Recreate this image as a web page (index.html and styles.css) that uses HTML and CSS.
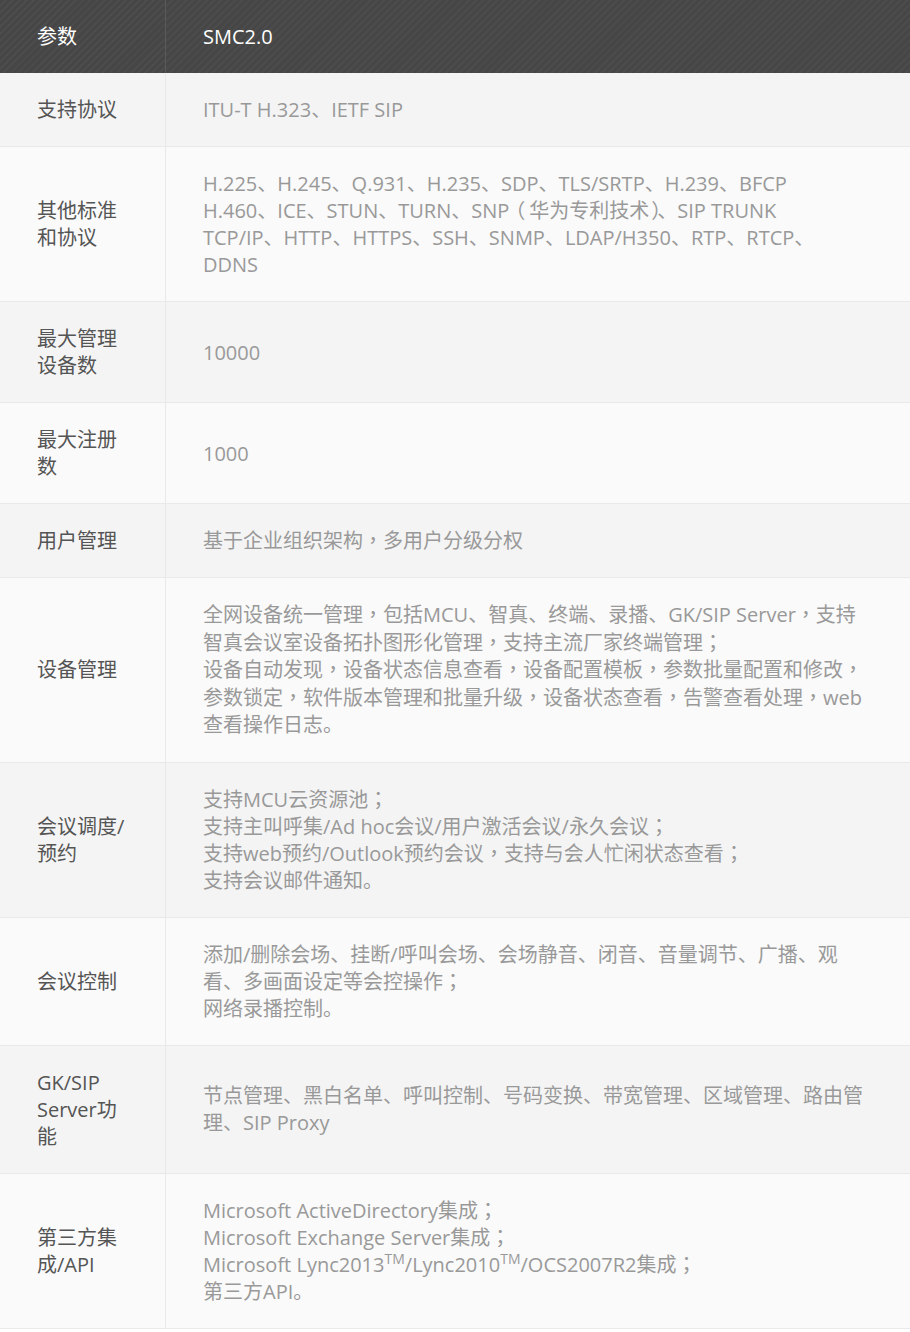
FILE: index.html
```html
<!DOCTYPE html>
<html lang="zh-CN">
<head>
  <meta charset="UTF-8">
  <meta name="viewport" content="width=device-width, initial-scale=1.0">
  <title>SMC2.0 参数</title>
  <link rel="stylesheet" href="styles.css">
</head>
<body>

  <table class="spec-table">
    <thead>
      <tr>
        <th class="col-name">参数</th>
        <th>SMC2.0</th>
      </tr>
    </thead>
    <tbody>
      <tr>
        <td class="col-name">支持协议</td>
        <td>ITU-T H.323、IETF SIP</td>
      </tr>
      <tr>
        <td class="col-name">其他标准和协议</td>
        <td>H.225、H.245、Q.931、H.235、SDP、TLS/SRTP、H.239、BFCP<br>H.460、ICE、STUN、TURN、SNP<span class="fw paren-l" lang="zh-TW">（</span>华为专利技术<span class="fw paren-r" lang="zh-TW">）</span>、SIP TRUNK<br>TCP/IP、HTTP、HTTPS、SSH、SNMP、LDAP/H350、RTP、RTCP、<br>DDNS</td>
      </tr>
      <tr>
        <td class="col-name">最大管理设备数</td>
        <td>10000</td>
      </tr>
      <tr>
        <td class="col-name">最大注册数</td>
        <td>1000</td>
      </tr>
      <tr>
        <td class="col-name">用户管理</td>
        <td>基于企业组织架构<span class="fw" lang="zh-TW">，</span>多用户分级分权</td>
      </tr>
      <tr>
        <td class="col-name">设备管理</td>
        <td class="tall">全网设备统一管理<span class="fw" lang="zh-TW">，</span>包括MCU、智真、终端、录播、GK/SIP Server<span class="fw" lang="zh-TW">，</span>支持智真会议室设备拓扑图形化管理<span class="fw" lang="zh-TW">，</span>支持主流厂家终端管理<span class="fw" lang="zh-TW">；</span><br>设备自动发现<span class="fw" lang="zh-TW">，</span>设备状态信息查看<span class="fw" lang="zh-TW">，</span>设备配置模板<span class="fw" lang="zh-TW">，</span>参数批量配置和修改<span class="fw" lang="zh-TW">，</span>参数锁定<span class="fw" lang="zh-TW">，</span>软件版本管理和批量升级<span class="fw" lang="zh-TW">，</span>设备状态查看<span class="fw" lang="zh-TW">，</span>告警查看处理<span class="fw" lang="zh-TW">，</span>web查看操作日志。</td>
      </tr>
      <tr>
        <td class="col-name">会议调度/预约</td>
        <td>支持MCU云资源池<span class="fw" lang="zh-TW">；</span><br>支持主叫呼集/Ad hoc会议/用户激活会议/永久会议<span class="fw" lang="zh-TW">；</span><br>支持web预约/Outlook预约会议<span class="fw" lang="zh-TW">，</span>支持与会人忙闲状态查看<span class="fw" lang="zh-TW">；</span><br>支持会议邮件通知。</td>
      </tr>
      <tr>
        <td class="col-name">会议控制</td>
        <td>添加/删除会场、挂断/呼叫会场、会场静音、闭音、音量调节、广播、观看、多画面设定等会控操作<span class="fw" lang="zh-TW">；</span><br>网络录播控制。</td>
      </tr>
      <tr>
        <td class="col-name">GK/SIP Server功能</td>
        <td>节点管理、黑白名单、呼叫控制、号码变换、带宽管理、区域管理、路由管理、SIP Proxy</td>
      </tr>
      <tr>
        <td class="col-name">第三方集成/API</td>
        <td>Microsoft ActiveDirectory集成<span class="fw" lang="zh-TW">；</span><br>Microsoft Exchange Server集成<span class="fw" lang="zh-TW">；</span><br>Microsoft Lync2013<sup>TM</sup>/Lync2010<sup>TM</sup>/OCS2007R2集成<span class="fw" lang="zh-TW">；</span><br>第三方API。</td>
      </tr>
    </tbody>
  </table>

</body>
</html>
```

FILE: styles.css
```css
body {
  margin: 0;
  background-color: #fff;
  font-family: 'Open Sans', 'Noto Sans CJK SC', sans-serif;
  font-size: 20px;
  line-height: 27px;
}
.spec-table {
  width: 910px;
  border-collapse: collapse;
  table-layout: fixed;
}
.spec-table th,
.spec-table td {
  padding: 23px 40px 23px 37px;
  text-align: left;
  vertical-align: middle;
  border-bottom: 1px solid #e9e9e9;
  border-left: 1px solid #e9e9e9;
}
.spec-table .col-name {
  width: 88px;
  border-left: none;
}
.spec-table thead th {
  font-weight: normal;
  color: #fff;
  border-bottom: none;
  border-left: 1px solid #5a5a5a;
  background-color: #464646;
  background-image: repeating-linear-gradient(135deg, #464646 0, #464646 3px, #4c4c4c 3px, #4c4c4c 5px);
}
.spec-table thead th.col-name {
  border-left: none;
}
.spec-table td {
  color: #999;
}
.spec-table td.col-name {
  color: #555;
}
.spec-table td.tall {
  line-height: 27.6px;
}
.spec-table tbody tr:nth-child(odd) {
  background-color: #f4f4f4;
}
.spec-table tbody tr:nth-child(even) {
  background-color: #fafafa;
}
/* 全角标点居中 */
.fw {
  font-family: 'Noto Sans CJK TC', sans-serif;
  line-height: 1;
}
.paren-l {
  margin: 0 4px 0 -4px;
}
.paren-r {
  margin: 0 -4px 0 2px;
}
sup {
  font-size: 14px;
  line-height: 0;
}
```
